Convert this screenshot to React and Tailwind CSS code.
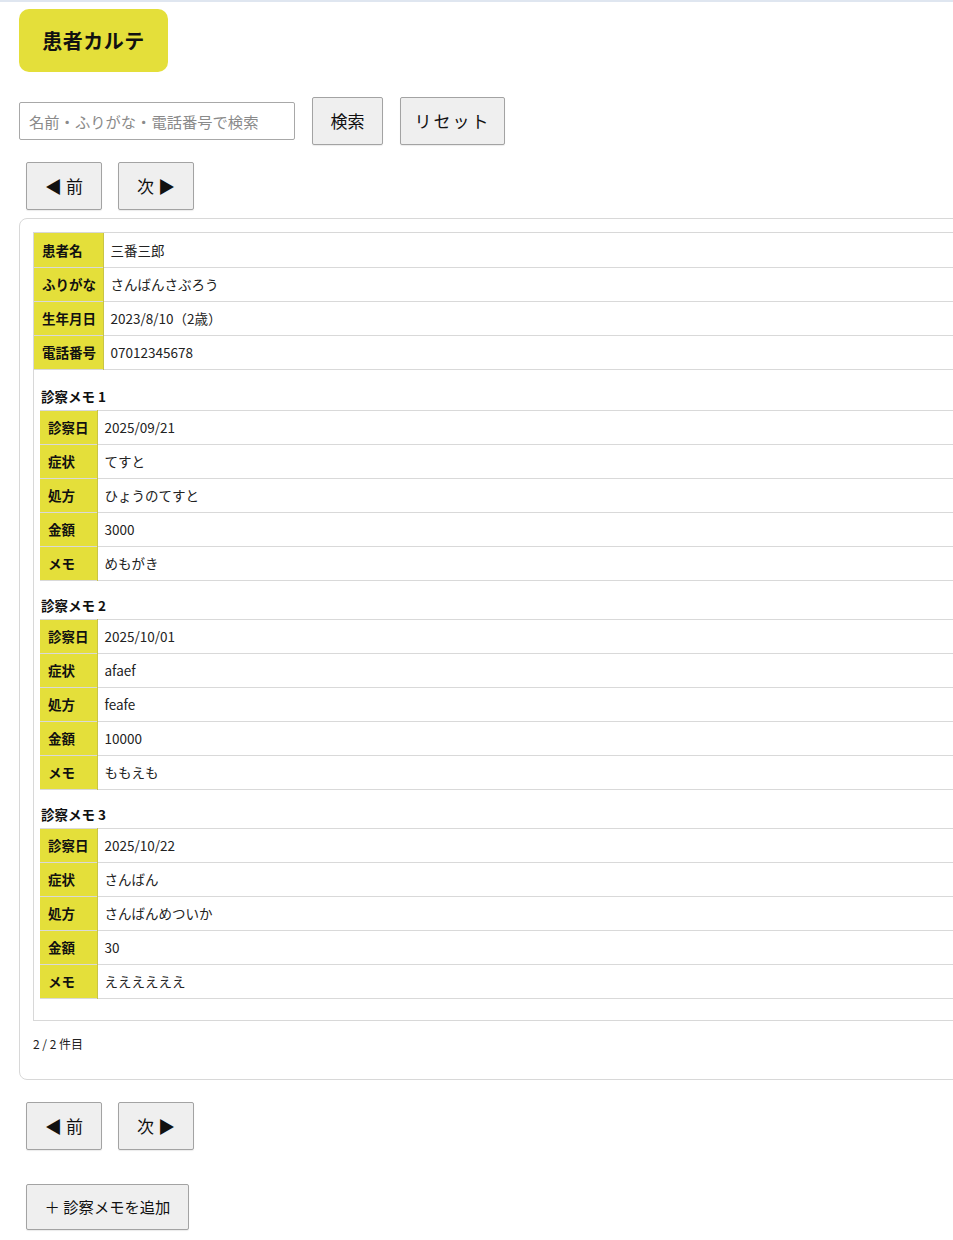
import React from "react";

const patient = [
  ["患者名", "三番三郎"],
  ["ふりがな", "さんばんさぶろう"],
  ["生年月日", "2023/8/10（2歳）"],
  ["電話番号", "07012345678"],
];

const memos = [
  { date: "2025/09/21", symptom: "てすと", rx: "ひょうのてすと", amount: "3000", note: "めもがき" },
  { date: "2025/10/01", symptom: "afaef", rx: "feafe", amount: "10000", note: "ももえも" },
  { date: "2025/10/22", symptom: "さんばん", rx: "さんばんめついか", amount: "30", note: "ええええええ" },
];

// base look shared by every grey button (size set per button)
const btn =
  "bg-[#efefef] border border-[#a3a3a3] rounded-[2px] text-[#111] shadow-[0_1px_1px_rgba(0,0,0,0.08)]";

function Row({ label, value, labelW }) {
  return (
    <tr className="h-[34px] border-b border-[#d9d9d9]">
      <th className={`${labelW} bg-[#e4df3a] border-r border-[#c9c545] text-left pl-[8px] pr-[3px] font-bold text-[13.5px] text-[#111] whitespace-nowrap`}>
        {label}
      </th>
      <td className="pl-[7px] text-[13.5px] text-[#222]">{value}</td>
    </tr>
  );
}

function Pager() {
  return (
    <div className="flex gap-[16px] pl-[7px]">
      <button className={`${btn} w-[76px] h-[48px] text-[17px]`}>◀ 前</button>
      <button className={`${btn} w-[76px] h-[48px] text-[17px]`}>次 ▶</button>
    </div>
  );
}

export default function App() {
  return (
    <div
      className="min-h-[1240px] w-full overflow-hidden bg-white border-t-2 border-[#dfe6f0] text-[#111]"
      style={{ fontFamily: '"Noto Sans CJK JP", "Noto Sans", sans-serif' }}
    >
      <div className="pl-[19px] pt-[7px]">
        <div className="w-[149px] h-[63px] rounded-[10px] bg-[#e4df3a] flex items-center justify-center">
          <h1 className="text-[20px] font-bold tracking-[0.5px]">患者カルテ</h1>
        </div>

        {/* search */}
        <div className="flex items-center mt-[25px] gap-[17px]">
          <input
            className="w-[276px] h-[38px] border border-[#a8a8a8] rounded-[2px] px-[9px] text-[15.3px] placeholder:text-[#8a8a8a] outline-none"
            placeholder="名前・ふりがな・電話番号で検索"
          />
          <button className={`${btn} w-[71px] h-[48px] text-[17px]`}>検索</button>
          <button className={`${btn} w-[105px] h-[48px] text-[17px] tracking-[2px]`}>リセット</button>
        </div>

        <div className="mt-[17px]">
          <Pager />
        </div>

        {/* card */}
        <div className="mt-[8px] w-[1100px] border border-[#d8d8d8] rounded-[8px] pt-[13px] pl-[13px] pb-[26px]">
          <div className="border border-[#d8d8d8] pb-[21px]">
            <table className="w-full border-collapse">
              <tbody>
                {patient.map(([l, v]) => (
                  <Row key={l} label={l} value={v} labelW="w-[69px]" />
                ))}
              </tbody>
            </table>
            <div className="h-[2px]" />
            {memos.map((m, i) => (
              <div key={i} className="pt-[14px] pl-[6px]">
                <div className="h-[21px] pl-[1px] text-[13.5px] font-bold leading-[21px]">診察メモ {i + 1}</div>
                <table className="w-full border-collapse mt-[3px] border-t border-[#d9d9d9]">
                  <tbody>
                    <Row label="診察日" value={m.date} labelW="w-[57px]" />
                    <Row label="症状" value={m.symptom} labelW="w-[57px]" />
                    <Row label="処方" value={m.rx} labelW="w-[57px]" />
                    <Row label="金額" value={m.amount} labelW="w-[57px]" />
                    <Row label="メモ" value={m.note} labelW="w-[57px]" />
                  </tbody>
                </table>
              </div>
            ))}
          </div>
          <div className="mt-[14px] text-[12px] text-[#222]">2 / 2 件目</div>
        </div>

        <div className="mt-[22px]">
          <Pager />
        </div>

        <div className="mt-[34px] pl-[7px]">
          <button className={`${btn} w-[163px] h-[46px] text-[15.3px]`}>＋ 診察メモを追加</button>
        </div>
      </div>
    </div>
  );
}
